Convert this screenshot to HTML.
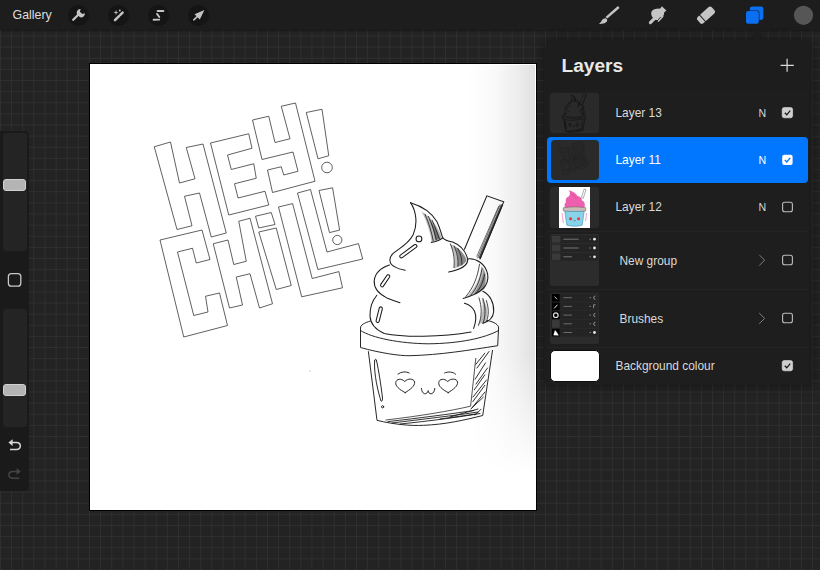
<!DOCTYPE html>
<html><head><meta charset="utf-8">
<style>
*{margin:0;padding:0;box-sizing:border-box}
html,body{width:820px;height:570px;overflow:hidden;background:#232323;font-family:"Liberation Sans",sans-serif}
.abs{position:absolute}
#grid{left:0;top:30px;width:820px;height:540px;
 background-color:#232323;
 background-image:linear-gradient(to right, #2f2f2f 1px, transparent 1px),linear-gradient(to bottom, #2f2f2f 1px, transparent 1px);
 background-size:11.13px 11.13px;background-position:0px -5.6px}
#topbar{left:0;top:0;width:820px;height:30px;background:#1d1d1d;box-shadow:0 1px 2px rgba(0,0,0,0.35)}
.gal{left:12.5px;top:7.5px;color:#dedede;font-size:12.4px}
.tcirc{width:21px;height:21px;border-radius:50%;background:#151515;top:4.5px}
#canvas{left:89px;top:63px;width:448px;height:448px;background:#000;z-index:2}
#paper{left:90px;top:64px;width:446px;height:446px;background:#fff;overflow:hidden;z-index:2}
#shade{left:0;top:1px;width:445px;height:445px;
 background:linear-gradient(to right, rgba(0,0,0,0) 378px, rgba(0,0,0,0.025) 405px, rgba(0,0,0,0.07) 428px, rgba(0,0,0,0.125) 446px);
 -webkit-mask-image:linear-gradient(to bottom,#000 290px,transparent 410px);mask-image:linear-gradient(to bottom,#000 290px,transparent 410px)}
#sidebar{left:0;top:131px;width:29px;height:360px;background:#1a1a1a;border-radius:0 4px 4px 0}
.track{left:3px;width:24px;background:#242424;border-radius:3px}
.handle{left:3px;width:23px;height:12px;background:#b4b4b4;border:1px solid #d0d0d0;border-radius:3px}
#panel{left:544px;top:40px;width:268px;height:345px;background:rgba(29,29,29,0.94);border-radius:12px 12px 6px 6px;
 box-shadow:0 0 10px 3px rgba(0,0,0,0.3)}
.ltitle{left:561.5px;top:55px;color:#e8e8e8;font-size:19.1px;font-weight:bold}
.plus{width:16px;height:16px}
.row{left:547px;width:261px;background:#1f1f1f}
.lname{color:#dadada;font-size:11.9px}
.thumb{left:550px;width:49px;background:#2a2a2a;border-radius:3px;overflow:hidden}
.N{color:#d6d6d6;font-size:10.6px;left:758.4px}
.chk{left:782px;width:11px;height:11px;border-radius:2px}
</style></head>
<body>
<div id="grid" class="abs"></div>
<div id="topbar" class="abs"></div>
<div class="abs gal">Gallery</div>
<div class="abs tcirc" style="left:67.5px"></div>
<div class="abs tcirc" style="left:107.5px"></div>
<div class="abs tcirc" style="left:148px"></div>
<div class="abs tcirc" style="left:188px"></div>

<div id="canvas" class="abs"></div>
<div id="paper" class="abs">
<svg class="abs" style="left:0;top:0" width="446" height="446" viewBox="90 64 446 446">
 <defs><g id="gLetters">
 <g fill="none" stroke-linejoin="miter" style="stroke:var(--lc,#2c2c2c);stroke-width:var(--lw,0.75)">
  <path d="M154.25,146.75 L170.50,142.00 L179.50,183.00 L195.00,178.75 L186.25,147.50 L203.00,144.00 L226.25,233.00 L211.25,237.00 L199.50,193.00 L184.50,196.25 L192.00,225.75 L177.00,229.50 Z M210.50,143.00 L248.75,133.75 L252.00,148.25 L227.50,155.00 L231.25,169.50 L253.75,163.75 L256.25,178.25 L234.50,183.75 L238.00,198.00 L265.00,191.25 L268.75,205.00 L228.75,215.00 Z M252.50,120.00 L268.75,116.25 L275.00,142.50 L290.00,138.75 L281.25,106.25 L295.50,103.00 L315.00,181.25 L272.50,192.50 L267.50,170.00 L281.25,166.75 L283.75,175.00 L298.00,171.25 L293.00,152.00 L262.00,159.50 Z M306.25,112.50 L322.00,109.25 L328.75,155.75 L318.00,158.75 Z M160.00,240.00 L202.00,230.00 L210.00,259.50 L196.25,263.00 L192.50,248.25 L177.50,252.00 L193.75,315.50 L208.00,312.00 L205.50,296.25 L219.50,293.00 L227.50,325.50 L183.75,337.00 Z M213.25,243.75 L228.00,240.00 L233.75,264.50 L246.25,261.25 L238.75,221.25 L250.00,218.25 L272.50,303.75 L259.50,308.00 L250.00,273.75 L236.25,277.00 L242.50,305.00 L229.50,308.00 Z M255.50,216.25 L271.25,212.50 L275.00,224.50 L258.75,228.00 Z M258.75,232.00 L276.25,228.00 L291.25,285.50 L276.25,289.50 Z M278.50,207.00 L292.60,203.60 L312.20,278.50 L338.90,271.60 L342.50,287.80 L301.70,296.80 Z M297.50,193.00 L310.50,189.50 L327.00,252.00 L358.50,243.60 L362.70,259.00 L317.90,269.50 Z M319.00,190.50 L332.60,187.80 L339.60,230.10 L329.50,232.60 Z"/>
  <circle cx="327" cy="167.5" r="5.3"/>
  <circle cx="337.3" cy="240" r="4.6"/>
 </g>
 <circle cx="310" cy="371" r="0.5" fill="#888" stroke="none"/>
</g><g id="gIce">
 <g transform="translate(350 190) scale(0.26316)" fill="none" stroke-linecap="round" style="stroke:var(--ic,#1c1c1c);stroke-width:var(--iw,4)">
  <path d="M230,48 C252,80 258,130 240,170 C222,205 190,220 165,240 C145,258 148,282 170,292 C185,300 200,303 210,305"/>
  <path d="M150,285 C120,295 95,315 92,345 C90,375 110,395 140,410 C160,418 180,425 190,428"/>
  <path d="M102,400 C85,420 75,450 76,480 C78,510 95,530 130,545 C200,560 350,560 460,540"/>
  <path d="M230,48 C270,60 310,85 330,120 C345,150 350,180 353,182 C360,192 375,195 390,198 C420,210 440,235 447,262 C450,285 430,300 375,312"/>
  <path d="M353,182 C340,192 325,197 309,199"/>
  <path d="M446,262 C480,258 515,280 523,320 C530,360 505,392 430,412"/>
  <path d="M505,385 C532,398 548,430 546,462 C544,490 528,500 505,506"/>
  <path d="M435,430 C470,440 490,470 470,526"/>
  <path d="M435,225 L520,22 L584,45 L494,262"/>
  <circle cx="262" cy="186" r="11"/>
  <path d="M198.6,256.8 L251.6,217.8 A6,6 0 0 0 244.4,208.2 L191.4,247.2 A6,6 0 0 0 198.6,256.8 Z"/>
  <path d="M127,365.4 L150,331.4 A6,6 0 0 0 140,324.6 L117,358.6 A6,6 0 0 0 127,365.4 Z"/>
  <path d="M110.8,499.5 L122.8,451.5 A6,6 0 0 0 111.2,448.5 L99.2,496.5 A6,6 0 0 0 110.8,499.5 Z"/>
 </g>
 <g transform="translate(350 190) scale(0.26316)" stroke="none" style="fill:var(--ic,#1c1c1c)">
  <!-- straw dark band -->
  <path d="M574,54 L582,57 L497,261 L488,258 Z" opacity="0.8"/>
  <!-- crescent top tier -->
  <path d="M272,82 C310,105 335,140 350,182 C338,190 322,195 310,196 C305,160 292,120 272,82 Z" opacity="0.3"/>
  <path d="M300,110 C318,130 332,155 342,182 C336,187 330,189 325,190 C320,160 312,135 300,110 Z" opacity="0.45"/>
  <!-- tier2 crescent -->
  <path d="M378,205 C410,215 435,240 444,265 C440,280 420,292 395,298 C402,265 395,230 378,205 Z" opacity="0.28"/>
  <path d="M395,212 C420,225 438,250 442,270 C435,282 420,288 410,290 C414,260 408,235 395,212 Z" opacity="0.35"/>
  <!-- tier3 crescent -->
  <path d="M500,288 C520,310 524,350 512,375 C495,392 470,402 440,408 C475,375 495,335 500,288 Z" opacity="0.25"/>
  <path d="M508,300 C518,330 516,360 505,378 C490,388 478,394 468,398 C490,368 504,335 508,300 Z" opacity="0.35"/>
  <!-- tier4 -->
  <path d="M500,410 C520,430 528,465 515,500 C505,505 495,508 488,510 C505,475 508,440 500,410 Z" opacity="0.3"/>
 </g>
 <g transform="translate(350 190) scale(0.26316)" fill="none" stroke-linecap="round" style="stroke:var(--ic,#1c1c1c);stroke-width:var(--ih,3)">
   <path d="M570,56 L485,258 M565,62 L482,252" style="stroke-width:2.4"/>
   <path d="M285,92 C302,130 310,162 316,192 M298,100 C314,135 322,165 328,190 M312,115 C326,145 334,170 340,186"/>
   <path d="M382,205 C395,240 398,265 395,295 M395,212 C408,240 412,265 410,290 M410,222 C422,245 426,265 425,285"/>
   <path d="M492,282 C485,330 470,370 440,405 M502,298 C495,340 482,375 458,400 M512,320 C505,352 494,378 475,395"/>
   <path d="M490,410 C502,445 502,480 488,515 M505,412 C516,445 516,478 505,508 M518,420 C528,450 528,478 518,500"/>
 </g>
 <g fill="none" stroke-linecap="round" style="stroke:var(--ic,#1c1c1c);stroke-width:var(--cw,0.95)">
  <path d="M370.5,321 C364,323 360.5,325 360.5,328 L360.5,347.5 C380,353 400,356 410,355.7 C440,355 470,350 497.7,345.7 L498.6,328 C498.6,325 495,322 487,320.4"/>
  <path d="M360.5,330.5 C372,338 400,343.5 428.2,343.8 C460,343.5 485,338 498.6,330.5"/>
  <path d="M368.4,351.6 L377,420.4 C395,424.5 410,426 423.7,425.3 C445,424.5 465,420 482.7,415.5 L492.5,350.4"/>
  <path d="M374.6,361 C373.8,375 378.2,392 381,401 C382,402 382.6,400 382.5,398 C381,385 378.6,370 376.4,360 C376,358.8 374.8,359 374.6,361 Z"/>
  <circle cx="382.6" cy="406.8" r="1.1"/>
  <path d="M405.2,392.6 C399,389.4 395.2,386 395.8,382.4 C396.4,378.8 401.2,378 404.8,381.6 C407.6,378 413.8,378.4 414.6,382 C415.2,385.8 410.2,389.6 405.2,392.6 Z"/>
  <path d="M448.2,392.6 C442,389.4 438.2,386 438.8,382.4 C439.4,378.8 444.2,378 447.8,381.6 C450.6,378 456.8,378.4 457.6,382 C458.2,385.8 453.2,389.6 448.2,392.6 Z"/>
  <path d="M398,374.2 C401,371.6 406,371.2 409.2,373"/>
  <path d="M444.6,373 C448,371.4 453,371.6 455.6,374.2"/>
  <path d="M421.4,388.4 C421.8,392.6 424,394.4 426,393.6 C427.4,393 428,391.6 428.1,390.6 C428.4,392.4 429.4,394 431.2,393.8 C433.4,393.4 434.6,391 434.8,388.4"/>
 </g>
 <g fill="none" stroke-linecap="round" style="stroke:var(--ic,#1c1c1c);stroke-width:var(--hw,0.75)">
   <path d="M475.8,358.4 L470.6,406.2 C450,411 420,416 386,420"/>
   <path d="M484.8,353.2 L475.8,364.4 M485.5,362.9 L475.1,379.3 M484.8,374.9 L474.3,389.8 M484.8,385.3 L472.8,401.7 M483.3,397.2 L472.1,407.7 M481,409.2 L475.1,415.1 M489,351.5 L477,368 M487.5,368 L476,384 M486.5,380 L473,397 M485,392 L471,409" style="stroke-width:var(--hw2,0.9)"/>
   <path d="M388,421.6 C420,418 450,414 474,410.5 M392,423 C420,419.5 455,415.5 478,412 M400,424 C430,421 460,417 480,413.5 M450,417 L478,409 M440,419 L476,414" style="stroke-width:var(--hw2,0.9)"/>
 </g>
</g></defs>
 <use href="#gLetters"/><use href="#gIce"/>
</svg>
<div id="shade" class="abs"></div></div>

<div id="sidebar" class="abs"></div>
<div class="abs track" style="top:133px;height:118px"></div>
<div class="abs handle" style="top:179px"></div>
<div class="abs track" style="top:309px;height:118px"></div>
<div class="abs handle" style="top:384px"></div>

<div id="panel" class="abs"></div>
<svg class="abs" style="left:744px;top:30px" width="26" height="11"><path d="M3,10.5 L13,1 L23,10.5 Z" fill="rgba(29,29,29,0.94)"/></svg>
<div class="abs ltitle">Layers</div>

<!-- top icons -->
<svg class="abs" style="left:0;top:0" width="820" height="30" viewBox="0 0 820 30">
 <g fill="#c4c4c4" stroke="#c4c4c4">
  <!-- wrench -->
  <line x1="73.2" y1="19.8" x2="79" y2="14" stroke-width="2.3" stroke-linecap="round"/>
  <path d="M77.2 14.6 A3.6 3.6 0 0 1 80.6 9.1 L80.6 9.1 L79.9 11.8 L82.3 14.1 L84.9 13.3 A3.6 3.6 0 0 1 79.4 16.8 Z" stroke="none"/>
  <!-- wand -->
  <line x1="115" y1="20.2" x2="119" y2="16.2" stroke-width="2.5" stroke-linecap="round"/>
  <line x1="120.3" y1="14.9" x2="122.6" y2="12.6" stroke-width="2.5" stroke-linecap="round"/>
  <path d="M116 9.8 L116.6 11.9 L118.7 12.5 L116.6 13.1 L116 15.2 L115.4 13.1 L113.3 12.5 L115.4 11.9 Z" stroke="none"/>
  <circle cx="119.8" cy="10.5" r="0.9" stroke="none"/>
  <!-- S -->
  <line x1="157.6" y1="11" x2="163.4" y2="11" stroke-width="1.9" stroke-linecap="round"/>
  <line x1="157" y1="13.9" x2="159.3" y2="17" stroke-width="1.9" stroke-linecap="round"/>
  <line x1="153.6" y1="19.8" x2="159.2" y2="19.6" stroke-width="1.9" stroke-linecap="round"/>
  <!-- arrow -->
  <line x1="193.8" y1="19.8" x2="198.8" y2="15.2" stroke-width="1.6" stroke-linecap="round"/>
  <path d="M204.4 9.9 L194.6 14.2 L199.8 19.6 Z" stroke="none"/>
  <!-- brush -->
  <path d="M617.6,6.2 Q619.9,6.5 619.3,8.3 L607.3,18.5 L605.5,17.1 Z" stroke="none"/>
  <path d="M606.2,18.4 C607.9,19.6 607.4,21.4 605.7,22.5 C603.9,23.7 601.4,24.1 598.8,23.9 C600.4,22.9 601,21.7 601.8,20.4 C602.8,18.7 604.6,17.6 606.2,18.4 Z" stroke="none"/>
  <!-- smudge -->
  <line x1="650.4" y1="22.6" x2="655.8" y2="17.2" stroke-width="3.1" stroke-linecap="round"/>
  <path d="M652.6,17.4 C651.3,15.4 650.9,13.4 651.4,12 C652.2,10 654,9.2 656.2,8.8 L660.4,8.6 L661.8,6.2 L666.4,10.6 L664.1,12.4 C664.2,13.8 663.9,15 663.2,16 L659.2,20 L655.6,20 Z" stroke="none"/>
  <line x1="658.4" y1="20.8" x2="662.6" y2="16.4" stroke-width="1.8" stroke-linecap="round"/>
  <path d="M656.9,21.2 L660.9,16.9" stroke="#1d1d1d" stroke-width="0.9"/>
  <!-- eraser -->
  <g transform="translate(706 15.2) rotate(-42)">
   <rect x="-9.6" y="-4.3" width="19.2" height="8.6" rx="2.6" stroke="none"/>
   <line x1="-4.6" y1="-5" x2="-4.6" y2="5" stroke="#1c1c1c" stroke-width="1"/>
  </g>
 </g>
 <!-- layers icon -->
 <rect x="749.8" y="6.5" width="13.6" height="13.4" rx="2.4" fill="#0b6ff2" stroke="#1c1c1c" stroke-width="0"/>
 <rect x="745.2" y="10.4" width="14.2" height="14" rx="2.6" fill="#1c1c1c"/>
 <rect x="746" y="11.1" width="12.8" height="12.7" rx="2.2" fill="#0b6ff2"/>
 <!-- colour -->
 <circle cx="803.5" cy="15.3" r="9.6" fill="#565656"/>
</svg>

<svg class="abs plus" style="left:779.5px;top:58px" width="16" height="16" viewBox="0 0 16 16">
 <path d="M7.1 0.7 V13.8 M0.6 7.3 H13.8" stroke="#dcdcdc" stroke-width="1.2"/>
</svg>

<div class="abs row" style="top:89.5px;height:293px;border-radius:4px;background:#1e1e1e"></div>
<div class="abs" style="left:547px;width:261px;top:230.5px;height:1px;background:#242424"></div>
<div class="abs" style="left:547px;width:261px;top:288.5px;height:1px;background:#242424"></div>
<div class="abs" style="left:547px;width:261px;top:346.5px;height:1px;background:#242424"></div>
<div class="abs row" style="top:136.5px;height:46px;background:#0077fe;border-radius:4px"></div>
<div class="abs thumb" style="top:93px;height:40px"></div>
<div class="abs thumb" style="top:140px;height:40px;left:551px;width:48px;border-radius:4px"></div>
<div class="abs thumb" style="top:187px;height:41px"></div>
<div class="abs" style="left:559px;top:187px;width:31px;height:41px;background:#fff"></div>
<div class="abs thumb" style="top:234px;height:51.5px"></div>
<div class="abs thumb" style="top:292.5px;height:51.5px"></div>
<div class="abs" style="left:549.5px;top:349.5px;width:50.5px;height:32px;background:#fff;border-radius:5px;border:1.6px solid #0c0c0c"></div>

<div class="abs lname" style="left:615.5px;top:106px">Layer 13</div>
<div class="abs lname" style="left:615.5px;top:153px;color:#fff">Layer 11</div>
<div class="abs lname" style="left:615.5px;top:200px">Layer 12</div>
<div class="abs lname" style="left:619.5px;top:253.5px">New group</div>
<div class="abs lname" style="left:619.5px;top:311.5px">Brushes</div>
<div class="abs lname" style="left:615.5px;top:359px">Background colour</div>

<div class="abs N" style="top:107px">N</div>
<div class="abs N" style="top:154px;color:#fff">N</div>
<div class="abs N" style="top:201px">N</div>

<svg class="abs" style="left:750px;top:90px" width="60" height="295" viewBox="750 90 60 295">
 <!-- checked grey -->
 <rect x="782.2" y="107.6" width="10.4" height="10.2" rx="2" fill="#cfcfcf" stroke="#e0e0e0" stroke-width="0.6"/>
 <path d="M784.8 112.8 L786.8 114.8 L790.2 110.6" fill="none" stroke="#1a1a1a" stroke-width="1.3"/>
 <!-- checked white -->
 <rect x="782.2" y="154.8" width="10.4" height="10.2" rx="2" fill="#ffffff"/>
 <path d="M784.8 160 L786.8 162 L790.2 157.8" fill="none" stroke="#0077fe" stroke-width="1.3"/>
 <!-- unchecked -->
 <rect x="782.6" y="202.2" width="9.8" height="9.6" rx="2" fill="none" stroke="#bdbdbd" stroke-width="1.1"/>
 <path d="M759.2 254.8 L764.6 260.2 L759.2 265.6" fill="none" stroke="#8a8a8a" stroke-width="0.9"/>
 <rect x="782.6" y="255.2" width="9.8" height="9.6" rx="2" fill="none" stroke="#bdbdbd" stroke-width="1.1"/>
 <path d="M759.2 313 L764.6 318.4 L759.2 323.8" fill="none" stroke="#8a8a8a" stroke-width="0.9"/>
 <rect x="782.6" y="313.2" width="9.8" height="9.6" rx="2" fill="none" stroke="#bdbdbd" stroke-width="1.1"/>
 <rect x="782.2" y="360.6" width="10.4" height="10.2" rx="2" fill="#cfcfcf" stroke="#e0e0e0" stroke-width="0.6"/>
 <path d="M784.8 365.8 L786.8 367.8 L790.2 363.6" fill="none" stroke="#1a1a1a" stroke-width="1.3"/>
</svg>

<!-- sidebar icons -->
<svg class="abs" style="left:0;top:260px" width="30" height="230" viewBox="0 260 30 230">
 <rect x="8.4" y="273.6" width="12.4" height="12.6" rx="3" fill="none" stroke="#c8c8c8" stroke-width="1.3"/>
 <path d="M11.8 442.6 H16.4 Q20.3 442.6 20.3 446 Q20.3 449.4 16.4 449.4 H10" fill="none" stroke="#d6d6d6" stroke-width="1.5"/>
 <path d="M8.4 442.6 L12.6 439.3 L12.6 445.9 Z" fill="#d6d6d6"/>
 <path d="M17.4 471.4 H12.8 Q8.9 471.4 8.9 474.8 Q8.9 478.2 12.8 478.2 H19.2" fill="none" stroke="#444" stroke-width="1.5"/>
 <path d="M20.8 471.4 L16.6 468.1 L16.6 474.7 Z" fill="#444"/>
</svg>

<svg class="abs" style="left:550px;top:93px;border-radius:3px" width="49" height="40" viewBox="550 93 49 40">
 <g transform="translate(502.4 61.0) scale(0.167)" style="--ic:#171717;--iw:14;--ih:10;--cw:5;--hw:3"><use href="#gIce"/></g>
</svg>
<svg class="abs" style="left:551px;top:140px" width="48" height="40" viewBox="551 140 48 40">
 <g transform="translate(537.5 126.9) scale(0.142)" style="--lc:#202020;--lw:5"><use href="#gLetters"/></g>
</svg>

<svg class="abs" style="left:559px;top:187px" width="31" height="41" viewBox="559 187 31 41">
 <rect x="559" y="187" width="31" height="41" fill="#fff"/>
 <path d="M581.4,197.6 L584.2,189 L586,189.6 L583.2,198.4 Z" fill="#fff" stroke="#8e8e8e" stroke-width="0.7"/>
 <path d="M568.5,190 C572,191 576,193 577.5,196 C580,196.5 582,198 582,200.5 C584.5,201.5 585.5,204.5 584.5,207.5 C582,209.5 570,210 565.5,208.5 C563.8,206 564.5,203.5 566,202 C565,199.5 566.5,197 569,196.2 C570.5,194 570,191.5 568.5,190 Z" fill="#ee5fae"/>
 <path d="M571,194 C573.5,195.5 575.5,197 576.5,199" stroke="#d13f8c" stroke-width="0.6" fill="none"/>
 <path d="M563.2,207.8 C570,206.6 580,206.6 585.8,207.8 L585.6,211 C578,212 570,212 563.4,211 Z" fill="#c9bdb8" stroke="#7b6b66" stroke-width="0.6"/>
 <path d="M564.8,211.4 L584.2,211.4 L582.2,225.2 C577,226.6 572,226.6 566.8,225.2 Z" fill="#86d3ea" stroke="#3c8fb0" stroke-width="0.6"/>
 <path d="M562,213 L563.4,223 M586.6,213 L585.6,221" stroke="#f6a6cf" stroke-width="1.1"/>
 <circle cx="570.6" cy="218.8" r="1.5" fill="#e33"/>
 <circle cx="578.6" cy="218.8" r="1.5" fill="#e33"/>
 <path d="M573.6,220.4 Q574.6,221.4 575.6,220.4" stroke="#333" stroke-width="0.5" fill="none"/>
</svg>
<svg class="abs" style="left:550px;top:234px" width="49" height="52" viewBox="550 234 49 52">
 <rect x="550" y="234" width="49" height="52" rx="2" fill="#2c2c2c"/>
 <g>
  <rect x="551" y="235.4" width="47" height="7.6" fill="#242424"/>
  <rect x="551" y="244.2" width="47" height="7.6" fill="#242424"/>
  <rect x="551" y="253" width="47" height="7.6" fill="#242424"/>
  <rect x="552" y="235.8" width="8.4" height="6.8" fill="#393939"/>
  <rect x="552" y="244.6" width="8.4" height="6.8" fill="#393939"/>
  <rect x="552" y="253.4" width="8.4" height="6.8" fill="#393939"/>
  <path d="M563.4,239.2 H578.6 M563.4,248 H578.6 M563.4,256.8 H572" stroke="#8a8a8a" stroke-width="0.8"/>
  <path d="M589.5,239.2 H591 M589.5,248 H591 M589.5,256.8 H591" stroke="#888" stroke-width="0.9"/>
  <circle cx="594.5" cy="239.2" r="1.4" fill="#e8e8e8"/>
  <circle cx="594.5" cy="248" r="1.4" fill="#e8e8e8"/>
  <circle cx="594.5" cy="256.8" r="1.4" fill="#e8e8e8"/>
 </g>
</svg>
<svg class="abs" style="left:550px;top:292px" width="49" height="52" viewBox="550 292 49 52">
 <rect x="550.5" y="292.7" width="48.5" height="51.3" rx="2" fill="#2c2c2c"/>
 <g>
  <rect x="551" y="293.7" width="47" height="8" fill="#242424"/>
  <rect x="551" y="302.4" width="47" height="8" fill="#242424"/>
  <rect x="551" y="311.1" width="47" height="8" fill="#242424"/>
  <rect x="551" y="319.8" width="47" height="8" fill="#242424"/>
  <rect x="551" y="328.5" width="47" height="8" fill="#242424"/>
  <rect x="552" y="294" width="7.6" height="7.6" fill="#000"/>
  <rect x="552" y="302.7" width="7.6" height="7.6" fill="#000"/>
  <rect x="552" y="311.4" width="7.6" height="7.6" fill="#000"/>
  <rect x="552" y="320.1" width="7.6" height="7.6" fill="#3a3a3a"/>
  <rect x="552" y="328.8" width="7.6" height="7.6" fill="#000"/>
  <path d="M554.6,296.6 L557,299.2" stroke="#ddd" stroke-width="0.9"/>
  <path d="M554.2,308.4 L557.4,304.8" stroke="#eee" stroke-width="1"/>
  <circle cx="555.8" cy="315.2" r="2.3" fill="none" stroke="#ddd" stroke-width="1.2"/>
  <path d="M553.4,335.2 L555,330 L557,332.6 L558.8,335.4 Z" fill="#fff"/>
  <path d="M563.4,297.7 H572 M563.4,306.4 H572 M563.4,315.1 H572 M563.4,323.8 H572 M563.4,332.5 H572" stroke="#7e7e7e" stroke-width="0.8"/>
  <path d="M589.5,297.7 H591 M589.5,306.4 H591 M589.5,315.1 H591 M589.5,323.8 H591 M589.5,332.5 H591" stroke="#888" stroke-width="0.9"/>
  <path d="M595.4,296 A1.7,1.7 0 1 0 595.4,299.4 M595.4,313.4 A1.7,1.7 0 1 0 595.4,316.8 M595.4,322.1 A1.7,1.7 0 1 0 595.4,325.5" stroke="#bbb" stroke-width="0.7" fill="none"/>
  <path d="M593.6,308.2 V304.8 H595.6" stroke="#bbb" stroke-width="0.7" fill="none"/>
  <circle cx="594.5" cy="332.5" r="1.4" fill="#e8e8e8"/>
 </g>
</svg>
</body></html>
